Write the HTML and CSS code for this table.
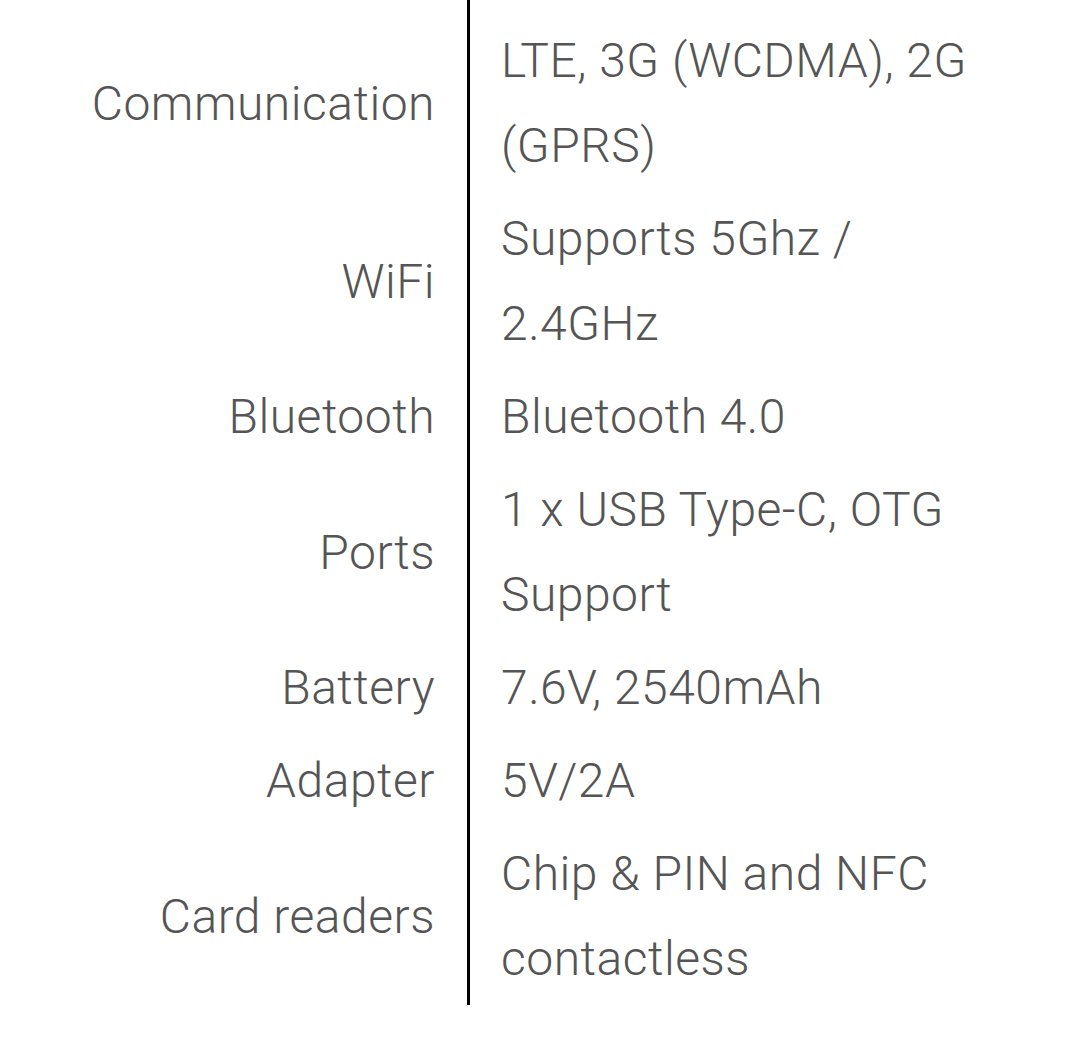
FILE: index.html
```html
<!DOCTYPE html>
<html>
<head>
<meta charset="utf-8">
<link rel="stylesheet" href="styles.css">
</head>
<body>
<div class="specs">
  <div class="spacer-label"></div><div class="divider"></div><div class="spacer-value"></div>
  <div class="label">Communication</div><div class="value">LTE, 3G (WCDMA), 2G (GPRS)</div>
  <div class="label">WiFi</div><div class="value">Supports 5Ghz / 2.4GHz</div>
  <div class="label">Bluetooth</div><div class="value">Bluetooth 4.0</div>
  <div class="label">Ports</div><div class="value">1 x USB Type-C, OTG Support</div>
  <div class="label">Battery</div><div class="value">7.6V, 2540mAh</div>
  <div class="label">Adapter</div><div class="value">5V/2A</div>
  <div class="label">Card readers</div><div class="value">Chip &amp; PIN and NFC contactless</div>
</div>
</body>
</html>
```
FILE: styles.css
```css
html, body {
  margin: 0;
  padding: 0;
  background: #ffffff;
}
.specs {
  display: grid;
  grid-template-columns: 467px 3px 500px;
  grid-template-rows: 14px;
  font-family: "Roboto", "Liberation Sans", sans-serif;
  font-weight: 300;
  font-size: 48px;
  letter-spacing: 0.5px;
  line-height: 85px;
  color: #555555;
}
.divider {
  grid-column: 2;
  grid-row: 1 / 9;
  background: #000000;
}
.label {
  grid-column: 1;
  text-align: right;
  padding: 4px 32px 4px 0;
  align-self: center;
}
.value {
  grid-column: 3;
  padding: 4px 0 4px 31px;
}
```
